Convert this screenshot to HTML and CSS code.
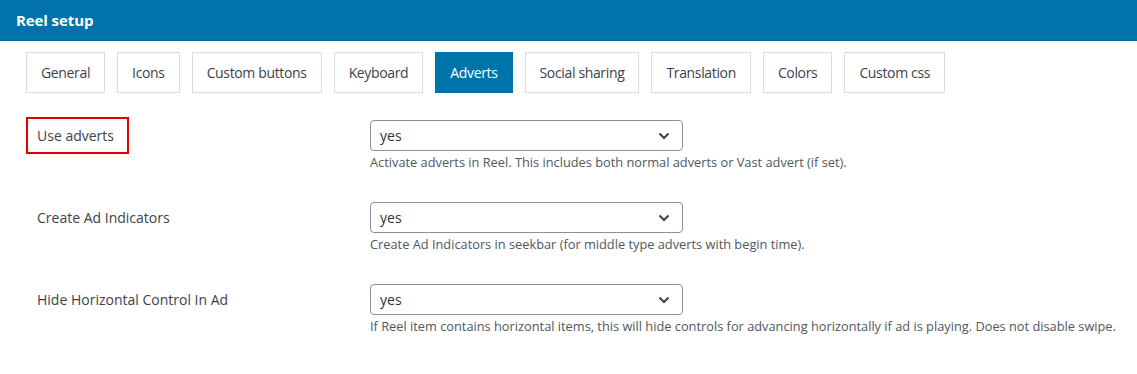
FILE: index.html
```html
<!DOCTYPE html>
<html>
<head>
<meta charset="utf-8">
<link rel="stylesheet" href="styles.css">
</head>
<body>
<div class="header"><h1 class="title">Reel setup</h1></div>
<div class="content">
  <div class="tabs">
    <span class="tab">General</span>
    <span class="tab">Icons</span>
    <span class="tab">Custom buttons</span>
    <span class="tab">Keyboard</span>
    <span class="tab active">Adverts</span>
    <span class="tab">Social sharing</span>
    <span class="tab">Translation</span>
    <span class="tab">Colors</span>
    <span class="tab">Custom css</span>
  </div>
  <div class="form">
    <div class="row">
      <div class="label-cell"><span class="label highlight">Use adverts</span></div>
      <div class="field">
        <div class="select"><span>yes</span><svg class="chev" width="12" height="8" viewBox="0 0 12 8"><path d="M1.5 1.5 L6 6 L10.5 1.5" fill="none" stroke="#3c434a" stroke-width="2"/></svg></div>
        <p class="desc">Activate adverts in Reel. This includes both normal adverts or Vast advert (if set).</p>
      </div>
    </div>
    <div class="row">
      <div class="label-cell"><span class="label">Create Ad Indicators</span></div>
      <div class="field">
        <div class="select"><span>yes</span><svg class="chev" width="12" height="8" viewBox="0 0 12 8"><path d="M1.5 1.5 L6 6 L10.5 1.5" fill="none" stroke="#3c434a" stroke-width="2"/></svg></div>
        <p class="desc">Create Ad Indicators in seekbar (for middle type adverts with begin time).</p>
      </div>
    </div>
    <div class="row">
      <div class="label-cell"><span class="label">Hide Horizontal Control In Ad</span></div>
      <div class="field">
        <div class="select"><span>yes</span><svg class="chev" width="12" height="8" viewBox="0 0 12 8"><path d="M1.5 1.5 L6 6 L10.5 1.5" fill="none" stroke="#3c434a" stroke-width="2"/></svg></div>
        <p class="desc">If Reel item contains horizontal items, this will hide controls for advancing horizontally if ad is playing. Does not disable swipe.</p>
      </div>
    </div>
  </div>
</div>
</body>
</html>
```
FILE: styles.css
```css
* { box-sizing: border-box; }
html, body { margin: 0; padding: 0; background: #fff; }
body { font-family: "Open Sans", "Noto Sans", sans-serif; color: #3c434a; }
.header { height: 41px; background: #0073aa; border-bottom: 1px solid #00669a; padding-left: 16px; display: flex; align-items: center; }
.title { margin: 0; font-size: 15px; font-weight: 700; color: #fff; letter-spacing: -0.1px; }
.content { padding-left: 26px; }
.tabs { display: flex; gap: 12px; margin-top: 11px; }
.tab { height: 41px; display: flex; align-items: center; padding: 0 14px; border: 1px solid #dcdcde; font-size: 14px; letter-spacing: -0.35px; color: #3c434a; background: #fff; }
.tab.active { background: #0073aa; border-color: #0073aa; color: #fff; }
.form { padding-top: 27px; }
.row { display: grid; grid-template-columns: 344px 1fr; height: 82px; }
.label-cell { height: 31px; display: flex; align-items: center; }
.label { font-size: 14px; line-height: 21px; padding: 6px 13px 6px 9px; border: 2px solid transparent; margin: -3px 0; }
.label.highlight { border-color: #e00000; }
.field { display: flex; flex-direction: column; align-items: flex-start; }
.select { width: 313px; height: 31px; border: 1px solid #8c8f94; border-radius: 4px; display: flex; align-items: center; justify-content: space-between; padding: 0 12px 0 9px; font-size: 14px; color: #2c3338; }
.desc { margin: 2px 0 0; font-size: 12.8px; line-height: 18px; color: #50575e; white-space: nowrap; }
```
